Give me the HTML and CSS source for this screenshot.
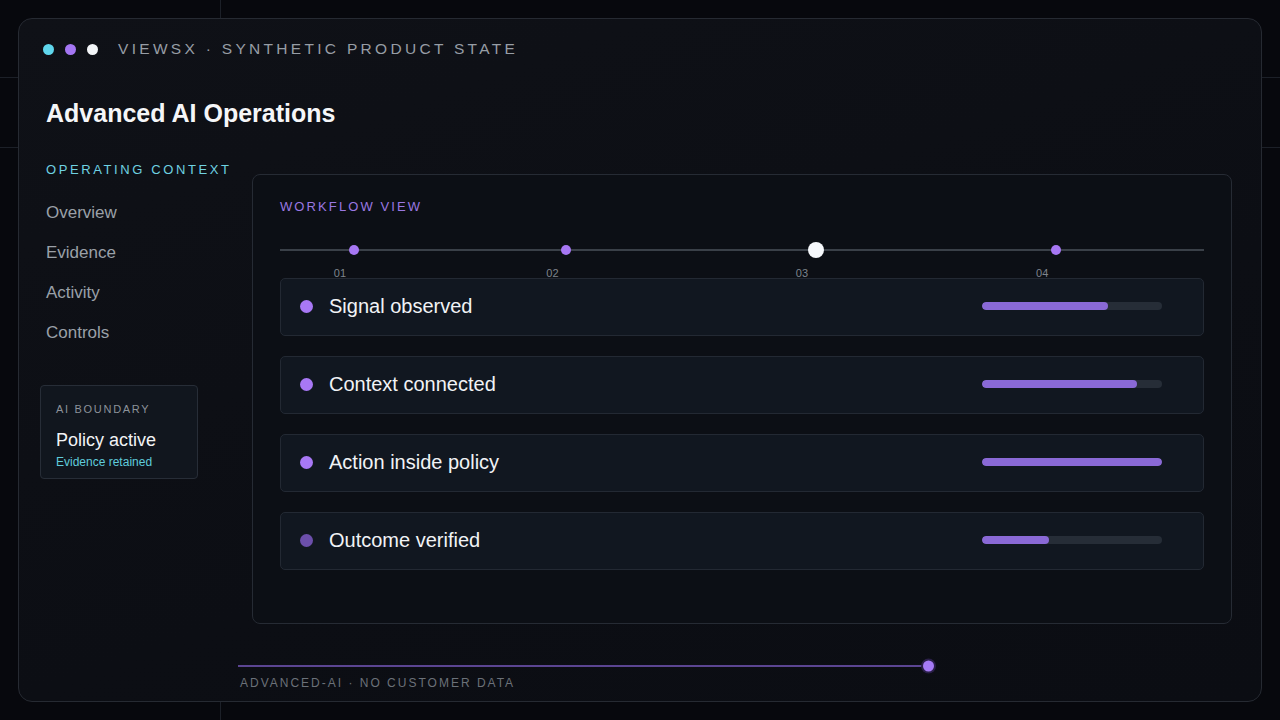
FILE: index.html
```html
<!DOCTYPE html>
<html lang="en">
<head>
    <meta charset="UTF-8">
    <meta name="viewport" content="width=device-width, initial-scale=1.0">
    <title>Advanced AI Operations</title>
    <link rel="stylesheet" href="styles.css">
</head>
<body>
    <div class="frame">
        <div class="topbar">
            <span class="dot cyan"></span>
            <span class="dot purple"></span>
            <span class="dot white"></span>
            <span class="brand">VIEWSX · SYNTHETIC PRODUCT STATE</span>
        </div>

        <h1>Advanced AI Operations</h1>

        <div class="layout">
            <aside class="sidebar">
                <div class="section-label">OPERATING CONTEXT</div>
                <ul class="nav">
                    <li>Overview</li>
                    <li>Evidence</li>
                    <li>Activity</li>
                    <li>Controls</li>
                </ul>
                <div class="boundary">
                    <div class="boundary-label">AI BOUNDARY</div>
                    <div class="boundary-title">Policy active</div>
                    <div class="boundary-note">Evidence retained</div>
                </div>
            </aside>

            <main class="panel">
                <div class="panel-label">WORKFLOW VIEW</div>
                <div class="timeline">
                    <div class="track"></div>
                    <span class="step" style="left: 8%"></span>
                    <span class="step" style="left: 31%"></span>
                    <span class="step current" style="left: 58%"></span>
                    <span class="step" style="left: 84%"></span>
                    <span class="step-num" style="left: 8%">01</span>
                    <span class="step-num" style="left: 31%">02</span>
                    <span class="step-num" style="left: 58%">03</span>
                    <span class="step-num" style="left: 84%">04</span>
                </div>

                <div class="rows">
                    <div class="row">
                        <span class="row-dot"></span>
                        <span class="row-name">Signal observed</span>
                        <div class="bar"><div class="fill" style="width: 70%"></div></div>
                    </div>
                    <div class="row">
                        <span class="row-dot"></span>
                        <span class="row-name">Context connected</span>
                        <div class="bar"><div class="fill" style="width: 86%"></div></div>
                    </div>
                    <div class="row">
                        <span class="row-dot"></span>
                        <span class="row-name">Action inside policy</span>
                        <div class="bar"><div class="fill" style="width: 100%"></div></div>
                    </div>
                    <div class="row">
                        <span class="row-dot dim"></span>
                        <span class="row-name">Outcome verified</span>
                        <div class="bar"><div class="fill" style="width: 37%"></div></div>
                    </div>
                </div>
            </main>
        </div>

        <footer class="footer">
            <div class="progress"><span class="progress-dot"></span></div>
            <div class="footer-text">ADVANCED-AI · NO CUSTOMER DATA</div>
        </footer>
    </div>
</body>
</html>
```

FILE: styles.css
```css
* {
    box-sizing: border-box;
}
html, body {
    margin: 0;
    height: 720px;
    overflow: hidden;
}
body {
    font-family: "Liberation Sans", Arial, sans-serif;
    color: #f3f4f6;
    padding: 18px;
    background:
        linear-gradient(90deg, transparent 220px, #1c2028 220px, #1c2028 221px, transparent 221px),
        linear-gradient(180deg, transparent 77px, #1c2028 77px, #1c2028 78px, transparent 78px),
        linear-gradient(180deg, transparent 147px, #1c2028 147px, #1c2028 148px, transparent 148px),
        #07080d;
}
.frame {
    height: 684px;
    border: 1px solid #262a32;
    border-radius: 14px;
    background: linear-gradient(160deg, #0f1117 0%, #0c0e14 60%, #0b0d13 100%);
    padding: 20px 29px 0 21px;
}
.topbar {
    display: flex;
    align-items: center;
    height: 20px;
    margin-left: 3px;
}
.dot {
    width: 11px;
    height: 11px;
    border-radius: 50%;
    margin-right: 11px;
}
.cyan { background: #5fd6ec; }
.purple { background: #a476f3; }
.white { background: #f3f5f8; }
.brand {
    margin-left: 9px;
    font-size: 15.5px;
    letter-spacing: 3.3px;
    color: #979da5;
}
h1 {
    margin: 39px 0 0 6px;
    font-size: 25px;
    line-height: 30px;
    font-weight: 700;
    color: #f5f6f8;
}
.layout {
    display: grid;
    grid-template-columns: 212px 1fr;
    align-items: start;
    margin-top: 32px;
}
.sidebar {
    padding-top: 1px;
}
.section-label {
    margin-left: 6px;
    font-size: 13px;
    line-height: 18px;
    letter-spacing: 2.6px;
    color: #6fd2e2;
}
.nav {
    list-style: none;
    margin: 14px 0 0 6px;
    padding: 0;
}
.nav li {
    font-size: 17px;
    line-height: 40px;
    color: #9aa0a8;
}
.boundary {
    width: 158px;
    margin-top: 32px;
    border: 1px solid #272d37;
    border-radius: 4px;
    background: #11161e;
    padding: 16px 15px 9px;
}
.boundary-label {
    font-size: 11px;
    line-height: 14px;
    letter-spacing: 1.7px;
    color: #8c929a;
}
.boundary-title {
    margin-top: 13px;
    font-size: 18px;
    line-height: 22px;
    color: #f1f3f5;
}
.boundary-note {
    margin-top: 4px;
    font-size: 12px;
    line-height: 14px;
    color: #5fcbdb;
}
.panel {
    height: 450px;
    margin-top: 14px;
    border: 1px solid #262b34;
    border-radius: 8px;
    background: #0c0f15;
    padding: 24px 27px 0 27px;
}
.panel-label {
    font-size: 13px;
    line-height: 16px;
    letter-spacing: 2.1px;
    color: #9a78e2;
}
.timeline {
    position: relative;
    height: 49px;
    margin-top: 14px;
}
.track {
    position: absolute;
    left: 0;
    right: 0;
    top: 20px;
    height: 2px;
    background: #3a4048;
}
.step {
    position: absolute;
    top: 21px;
    width: 10px;
    height: 10px;
    border-radius: 50%;
    background: #a677f3;
    transform: translate(-50%, -50%);
}
.step.current {
    width: 16px;
    height: 16px;
    background: #f6f8fb;
}
.step-num {
    position: absolute;
    top: 38px;
    font-size: 11px;
    line-height: 12px;
    color: #7e848c;
    transform: translateX(calc(-50% - 14px));
}
.rows {
    display: flex;
    flex-direction: column;
    gap: 20px;
}
.row {
    display: flex;
    align-items: center;
    height: 58px;
    border: 1px solid #232933;
    border-radius: 5px;
    background: #111720;
    padding: 0 41px 2px 19px;
}
.row-dot {
    width: 13px;
    height: 13px;
    border-radius: 50%;
    background: #a878f5;
}
.row-dot.dim {
    background: #6c4fab;
}
.row-name {
    margin-left: 16px;
    font-size: 20px;
    line-height: 22px;
    color: #f1f3f6;
}
.bar {
    margin-left: auto;
    width: 180px;
    height: 8px;
    border-radius: 4px;
    background: #262d37;
    overflow: hidden;
}
.fill {
    height: 100%;
    border-radius: 4px;
    background: #8a69d6;
}
.footer {
    margin-left: 198px;
    width: 696px;
}
.progress {
    position: relative;
    margin-top: 41px;
    width: 691px;
    height: 2px;
    background: #5b4592;
}
.progress-dot {
    position: absolute;
    right: -5px;
    top: 1px;
    width: 11px;
    height: 11px;
    border-radius: 50%;
    background: #a57af5;
    transform: translateY(-50%);
    box-shadow: 0 0 0 2px #2a1f48;
}
.footer-text {
    margin: 9px 0 0 2px;
    font-size: 12px;
    line-height: 14px;
    letter-spacing: 2px;
    color: #6b7179;
}
```
